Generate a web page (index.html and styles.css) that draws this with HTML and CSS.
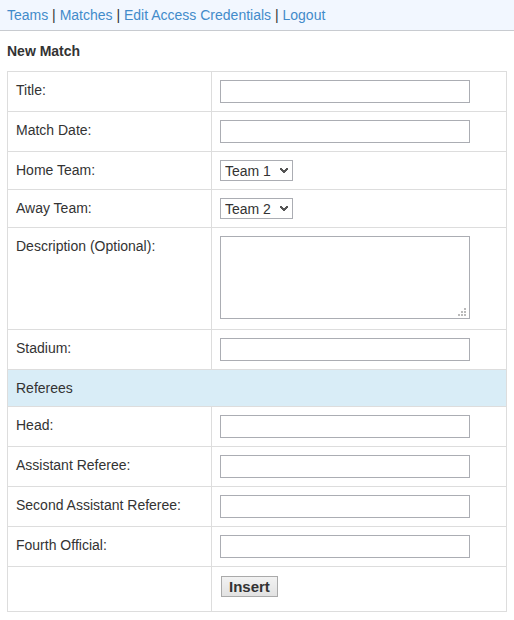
FILE: index.html
```html
<!DOCTYPE html>
<html lang="en">
<head>
<meta charset="utf-8">
<title>New Match</title>
<link rel="stylesheet" href="styles.css">
</head>
<body>
<nav class="topbar">
  <a href="#">Teams</a> | <a href="#">Matches</a> | <a href="#">Edit Access Credentials</a> | <a href="#">Logout</a>
</nav>
<main class="content">
  <h1 class="title">New Match</h1>
  <form>
    <table class="form-table">
      <colgroup><col class="label-col"><col></colgroup>
      <tbody>
        <tr><td><label for="title">Title:</label></td><td><input class="field" type="text" id="title"></td></tr>
        <tr><td><label for="date">Match Date:</label></td><td><input class="field" type="text" id="date"></td></tr>
        <tr>
          <td><label for="home">Home Team:</label></td>
          <td>
            <div class="picker">
              <select class="select" id="home"><option selected>Team 1</option><option>Team 2</option></select>
              <svg class="chevron" viewBox="0 0 8 6" aria-hidden="true"><path d="M0 0h2v1h1v1h2V1h1V0h2v2H7v1H6v1H5v1H3V4H2V3H1V2H0z"/></svg>
            </div>
          </td>
        </tr>
        <tr>
          <td><label for="away">Away Team:</label></td>
          <td>
            <div class="picker">
              <select class="select" id="away"><option>Team 1</option><option selected>Team 2</option></select>
              <svg class="chevron" viewBox="0 0 8 6" aria-hidden="true"><path d="M0 0h2v1h1v1h2V1h1V0h2v2H7v1H6v1H5v1H3V4H2V3H1V2H0z"/></svg>
            </div>
          </td>
        </tr>
        <tr>
          <td><label for="description">Description (Optional):</label></td>
          <td>
            <div class="area">
              <textarea class="field field-area" id="description"></textarea>
              <svg class="grip" viewBox="0 0 8 8" aria-hidden="true"><path d="M6 0h2v2H6zM3 3h2v2H3zM6 3h2v2H6zM0 6h2v2H0zM3 6h2v2H3zM6 6h2v2H6z"/></svg>
            </div>
          </td>
        </tr>
        <tr><td><label for="stadium">Stadium:</label></td><td><input class="field" type="text" id="stadium"></td></tr>
        <tr class="section"><td colspan="2">Referees</td></tr>
        <tr><td><label for="head">Head:</label></td><td><input class="field" type="text" id="head"></td></tr>
        <tr><td><label for="assistant">Assistant Referee:</label></td><td><input class="field" type="text" id="assistant"></td></tr>
        <tr><td><label for="second">Second Assistant Referee:</label></td><td><input class="field" type="text" id="second"></td></tr>
        <tr><td><label for="fourth">Fourth Official:</label></td><td><input class="field" type="text" id="fourth"></td></tr>
        <tr><td></td><td class="actions"><button class="button" type="button">Insert</button></td></tr>
      </tbody>
    </table>
  </form>
</main>
</body>
</html>
```
FILE: styles.css
```css
* {
  box-sizing: border-box;
}

body {
  margin: 0;
  background: #fff;
  color: #333;
  font: 14px/20px "Liberation Sans", Arial, sans-serif;
}

.topbar {
  padding: 5px 7px;
  background: #f2f7ff;
  border-bottom: 1px solid #c8cbd0;
}

.topbar a {
  color: #428bca;
  text-decoration: none;
}

.content {
  padding: 10px 7px;
}

.title {
  margin: 0 0 10px;
  font-size: 14px;
  line-height: 20px;
  font-weight: bold;
}

.form-table {
  width: 100%;
  border-collapse: collapse;
  table-layout: fixed;
}

.label-col {
  width: 204px;
}

.form-table td {
  padding: 8px;
  border: 1px solid #ddd;
  vertical-align: top;
}

.section td {
  background: #d9edf7;
}

.field,
.select {
  display: block;
  margin: 0;
  border: 1px solid #abadb3;
  border-radius: 0;
  background: #fff;
  color: #333;
  font: inherit;
}

.field {
  width: 250px;
  max-width: 100%;
  height: 23px;
  padding: 1px 4px;
}

.picker,
.area {
  position: relative;
  width: fit-content;
}

.select {
  appearance: none;
  width: 73px;
  height: 21px;
  padding: 1px 4px 0;
  line-height: 18px;
}

.chevron {
  position: absolute;
  top: 8px;
  right: 5px;
  width: 8px;
  height: 6px;
  fill: #555;
  pointer-events: none;
}

.area {
  margin-bottom: 2px;
}

.field-area {
  height: 83px;
  resize: none;
}

.grip {
  position: absolute;
  right: 4px;
  bottom: 3px;
  width: 8px;
  height: 8px;
  fill: #bbb;
  pointer-events: none;
}

.form-table .actions {
  padding: 9px 9px 14px;
}

.button {
  display: block;
  height: 21px;
  padding: 0 7px;
  border: 1px solid #aaa;
  border-radius: 0;
  background: linear-gradient(#f2f2f2, #e2e2e2);
  color: #333;
  font: bold 15px/19px "Liberation Sans", Arial, sans-serif;
}
```
